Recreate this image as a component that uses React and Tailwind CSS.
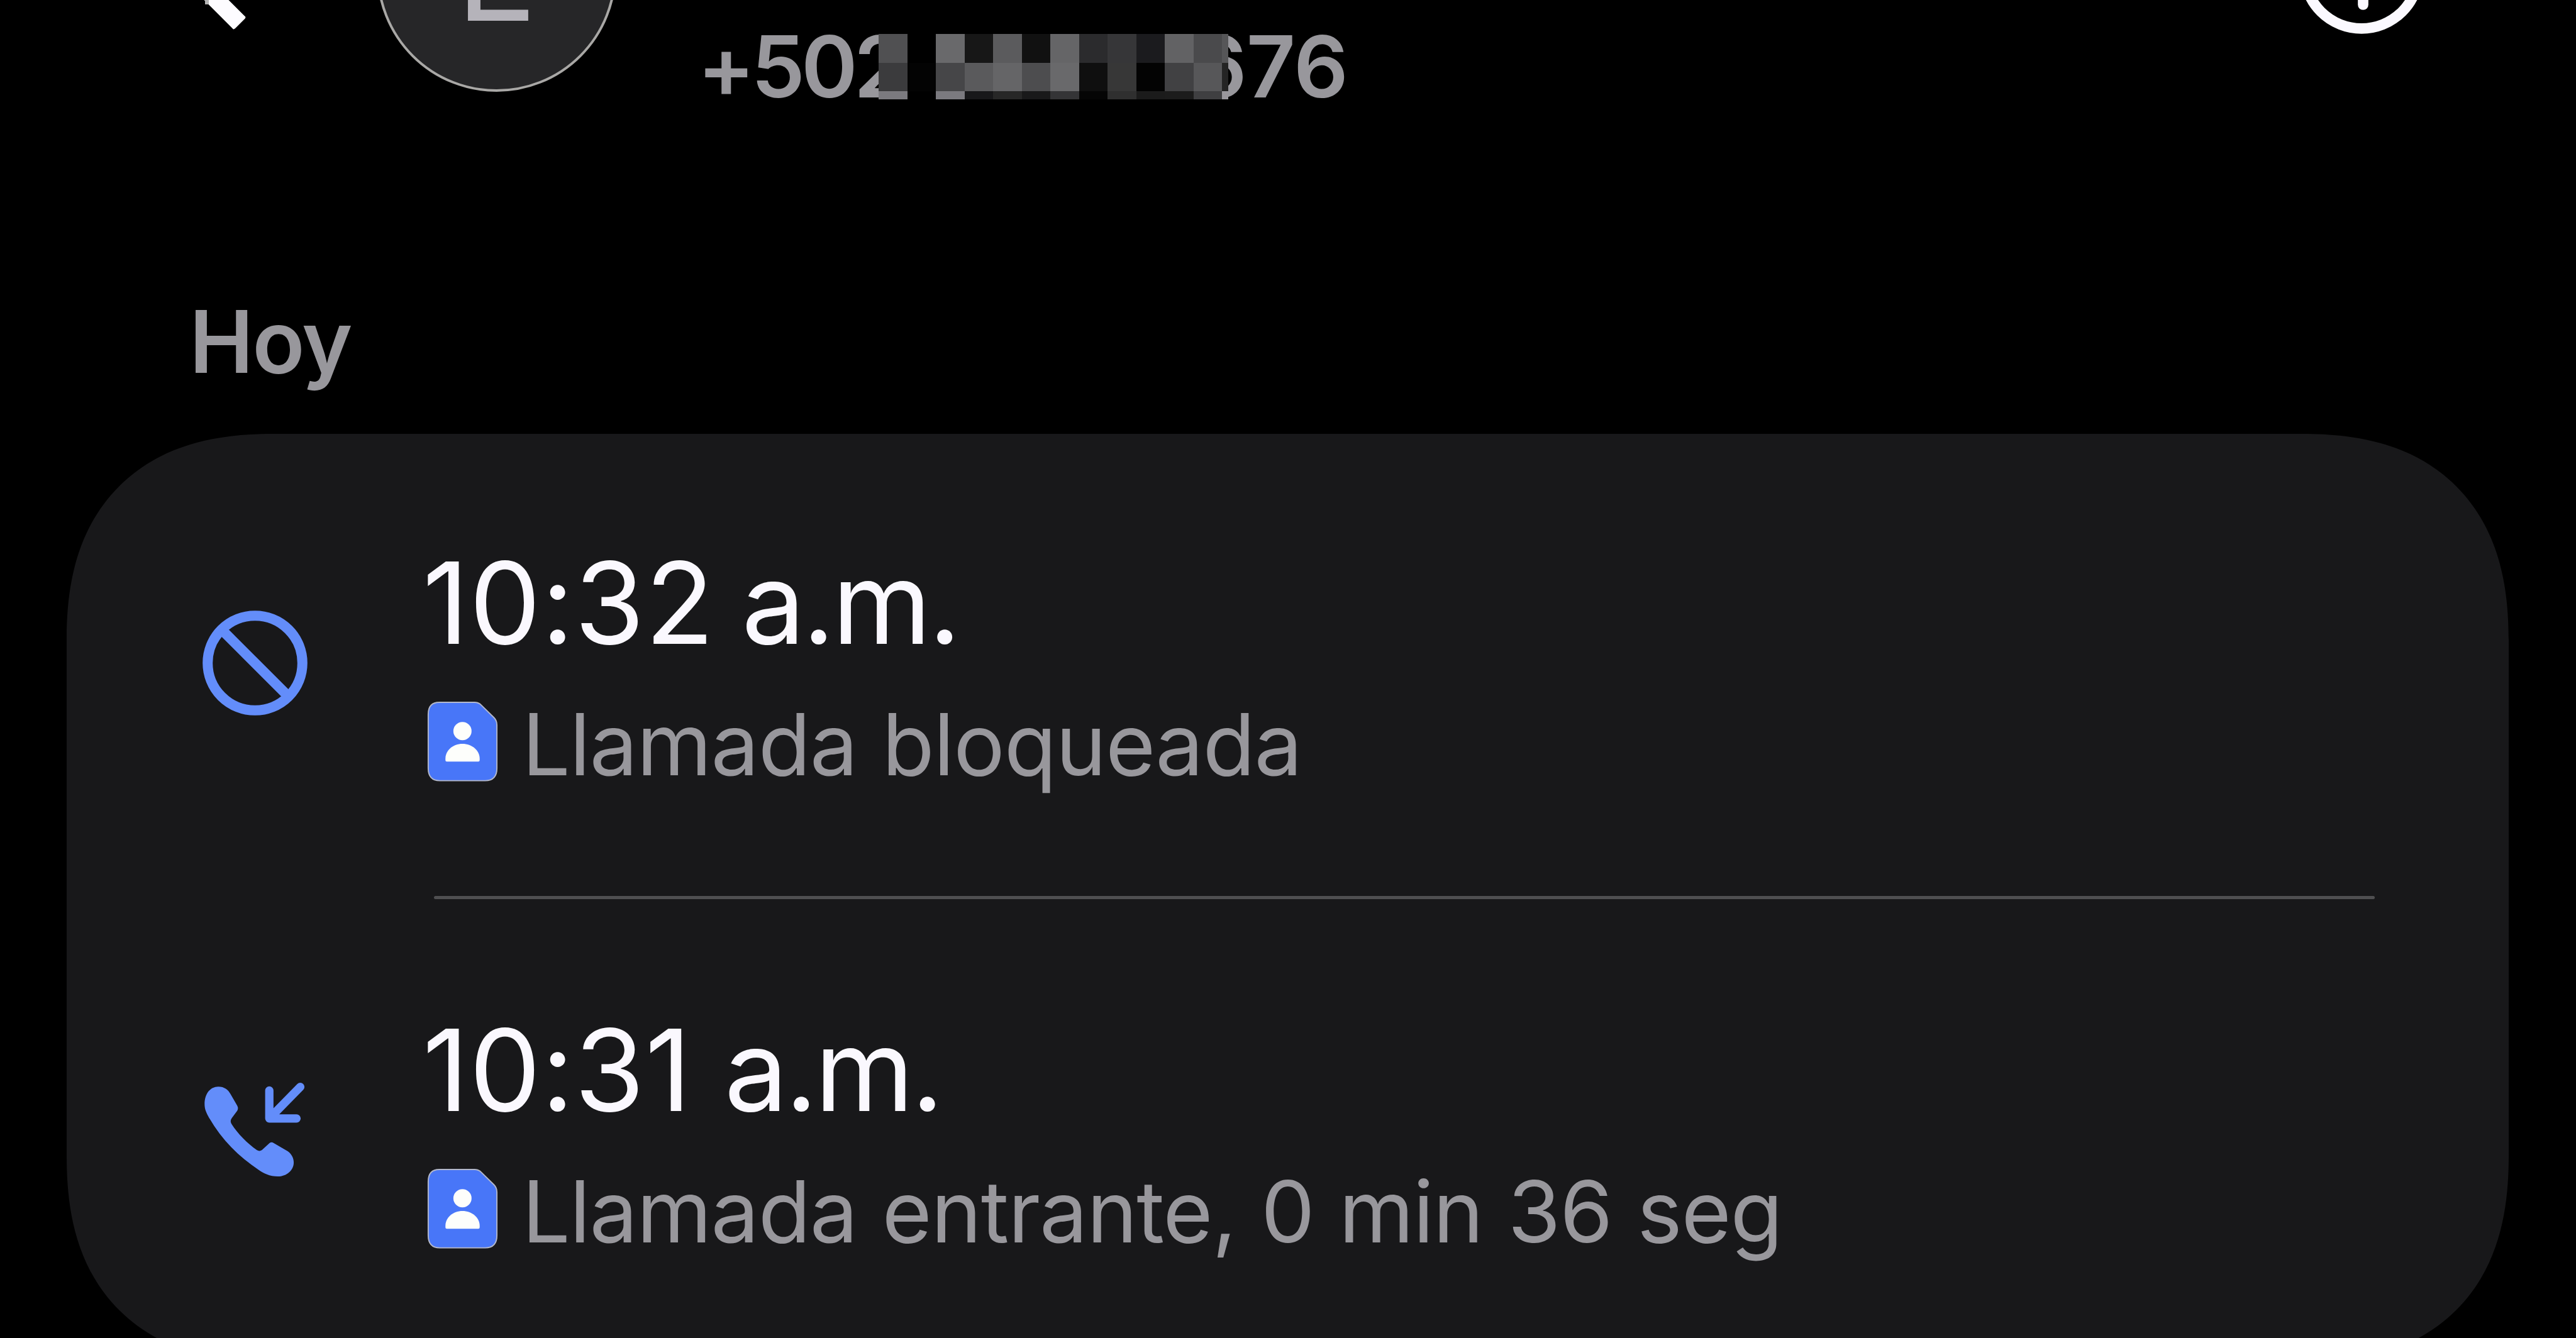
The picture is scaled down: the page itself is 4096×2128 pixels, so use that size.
const redacted = [
    ['#505052', '#3b3b3d', '#7b7a7f'],
    ['#000000', '#030303', '#000000'],
    ['#69696b', '#464648', '#7b7a7f'],
    ['#171717', '#5a5a5c', '#18181a'],
    ['#5b5b5d', '#656567', '#272727'],
    ['#111111', '#4d4d4f', '#19191a'],
    ['#656567', '#69696b', '#343436'],
    ['#2b2b2d', '#0f0f0f', '#050505'],
    ['#363638', '#373737', '#2f2f2f'],
    ['#1b1b1e', '#030303', '#1b1b1b'],
    ['#626264', '#414143', '#1c1c1c'],
    ['#4a4a4c', '#575759', '#3f3f41'],
    ['#565658', '#242424', '#99979c'],
];

const BackIcon = () => (
    <svg className="block w-[120px] h-[200px]" viewBox="280 -145 120 200" fill="none">
        <path d="M381 37L299 -45L381 -127" stroke="#fdfcff" strokeWidth="27.5" />
        <path d="M372 43L387 28" stroke="#fdfcff" strokeWidth="6" strokeLinecap="round" />
        <rect x="326" y="0" width="6" height="7" fill="#b5b5b5" />
    </svg>
);

const InfoIcon = () => (
    <svg className="block w-[200px] h-[200px]" viewBox="0 0 200 200" fill="none" stroke="#fbf9ff">
        <circle cx="100" cy="100" r="91.3" strokeWidth="16.7" />
        <path d="M102.5 100V153.5" strokeWidth="16.7" strokeLinecap="round" />
    </svg>
);

const BlockedIcon = () => (
    <svg className="block w-[167px] h-[167px]" viewBox="0 0 167 167" fill="none" stroke="#638dfa" strokeWidth="16">
        <circle cx="83.5" cy="83.5" r="75.3" />
        <path d="M31 31L136 136" />
    </svg>
);

const IncomingIcon = () => (
    <svg className="block w-[161px] h-[150px]" viewBox="70 80 510 475" fill="none">
        <path
            d="M140 100C170 100 190 115 202 138L235 195Q243 210 235 222L208 258Q198 272 206 287C240 340 285 385 335 420Q348 427 360 419L398 384Q408 376 418 383L490 425C510 440 520 460 520 482C520 520 485 552 440 552C400 552 365 535 345 520C240 450 155 365 90 250C76 225 71 208 71 188C71 135 100 100 140 100Z"
            fill="#638dfa"
        />
        <path d="M397 119V260H534M399 258L553 101" stroke="#638dfa" strokeWidth="42" strokeLinecap="round" strokeLinejoin="round" />
    </svg>
);

const SimIcon = () => (
    <svg className="block w-[113px] h-[129px]" viewBox="1188 509 359 409">
        <path
            d="M1250 515H1428Q1448 515 1460 527L1526 592Q1541 607 1541 630V848Q1541 911 1482 911H1252Q1194 911 1194 848V576Q1194 515 1250 515Z"
            fill="#4876f8"
            stroke="#b3b8cb"
            strokeWidth="6"
        />
        <circle cx="1367" cy="660" r="46" fill="#fdfefb" />
        <path d="M1281 800C1281 757 1320 725 1367 725S1454 757 1454 800V807Q1454 814 1447 814H1288Q1281 814 1281 807Z" fill="#fdfefb" />
    </svg>
);

const CallRow = ({ icon, iconClass, time, timeClass, detail }) => (
    <div className="flex items-start pl-[216px]">
        <div className={`w-[167px] shrink-0 flex justify-center ${iconClass}`}>{icon}</div>
        <div className="ml-[190px]">
            <div className={`-ml-[7px] text-[180px] leading-[180px] text-[#faf8fe] whitespace-nowrap ${timeClass}`}>
                <span className="tracking-[1px]">{time} </span>
                <span className="tracking-[-4.5px]">a.m.</span>
            </div>
            <div className="mt-[66px] flex items-start">
                <SimIcon />
                <div className="ml-[38px] mt-px text-[136px] leading-[136px] tracking-[-1.2px] [word-spacing:2.5px] text-[#98979c] whitespace-nowrap">{detail}</div>
            </div>
        </div>
    </div>
);

const App = () => {
    return (
        <div className="w-[4096px] h-[2128px] overflow-hidden bg-black font-['Inter',sans-serif]">
            <div className="-mt-[240px] h-[400px] flex items-start">
                <div className="ml-[280px] mt-[95px]">
                    <BackIcon />
                </div>
                <div className="ml-[199px] mt-[5px] w-[381px] h-[381px] shrink-0 rounded-full border-[4px] border-[#a9a8a6] bg-[#262628] flex items-center justify-center text-[214px] leading-none text-[#b5b3ba]">
                    E
                </div>
                <div className="ml-[129px] mt-[278px] relative flex justify-between w-[1034px] text-[136px] leading-[136px] font-semibold text-[#98979c]">
                    <span className="tracking-[-6px]">+502</span>
                    <span className="tracking-[-1px]">676</span>
                    <div className="absolute left-[288px] top-[16px] flex">
                        {redacted.map((col, i) => (
                            <div key={i} className="flex flex-col w-[45.5px] last:w-[10px]">
                                <div className="h-[45.5px]" style={{ background: col[0] }} />
                                <div className="h-[45.5px]" style={{ background: col[1] }} />
                                <div className="h-[12.5px]" style={{ background: col[2] }} />
                            </div>
                        ))}
                    </div>
                </div>
                <div className="ml-auto mr-[241px] mt-[94px]">
                    <InfoIcon />
                </div>
            </div>

            <h2 className="mt-[315px] ml-[301px] text-[137px] leading-[137px] tracking-[-2px] font-semibold text-[#98979c]">Hoy</h2>

            <div className="mt-[78px] ml-[106px] w-[3883px] h-[1477px] pt-[179px] rounded-[284px] supports-[corner-shape:squircle]:rounded-[330px] supports-[corner-shape:squircle]:[corner-shape:superellipse(1.25)] bg-[#18181a]">
                <CallRow
                    icon={<BlockedIcon />}
                    iconClass="mt-[102px]"
                    time="10:32"
                    timeClass="[word-spacing:-9px]"
                    detail="Llamada bloqueada"
                />
                <div className="mt-[173px] ml-[584px] mr-[213px] h-[5px] rounded-full bg-[#4f4f51]" />
                <div className="mt-[182px]">
                    <CallRow
                        icon={<IncomingIcon />}
                        iconClass="mt-[110px]"
                        time="10:31"
                        timeClass="[word-spacing:0px]"
                        detail="Llamada entrante, 0 min 36 seg"
                    />
                </div>
            </div>
        </div>
    );
};

export default App;
